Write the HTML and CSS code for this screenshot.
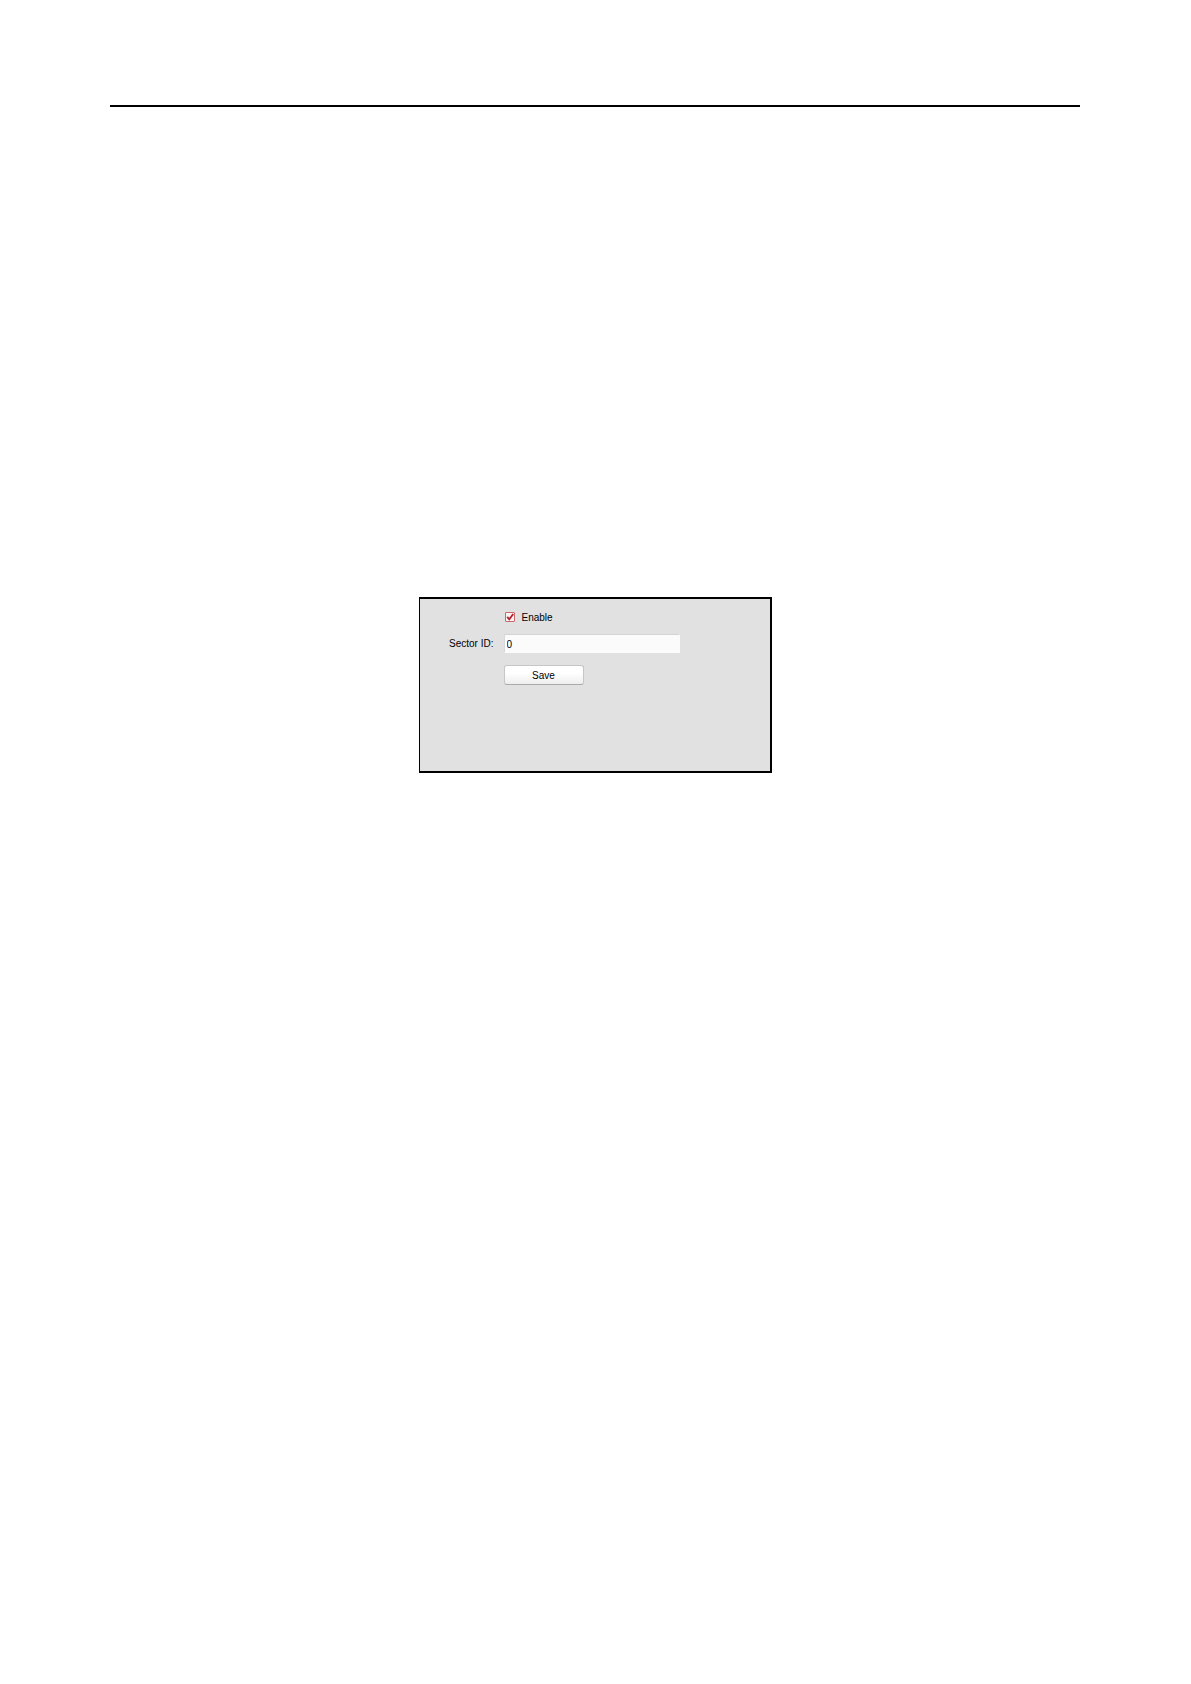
FILE: index.html
```html
<!DOCTYPE html>
<html lang="en">
<head>
<meta charset="utf-8">
<title>Sector ID</title>
<link rel="stylesheet" href="styles.css">
</head>
<body>
<main class="page">
  <hr class="rule">
  <form class="panel">
    <label class="enable">
      <span class="tick">
        <input class="tick-input" type="checkbox" checked>
        <svg class="tick-mark" viewBox="0 0 10 10" aria-hidden="true"><path d="M2.2 4.8 L4.3 7.3 L8.2 2" fill="none" stroke="#b3202c" stroke-width="1.8"/></svg>
      </span>
      <span class="text">Enable</span>
    </label>
    <label class="caption text" for="sector">Sector ID:</label>
    <input class="field" id="sector" type="text" value="0">
    <button class="save" type="button">Save</button>
  </form>
</main>
</body>
</html>
```
FILE: styles.css
```css
* {
  box-sizing: border-box;
}

body {
  margin: 0;
  background: #fff;
  color: #000;
  font: 10px/12px "Liberation Sans", Arial, sans-serif;
}

.page {
  padding: 105px 111px 0 110px;
}

.rule {
  height: 2px;
  margin: 0 0 490px;
  border: 0;
  background: #000;
}

.panel {
  display: grid;
  grid-template-columns: 74px minmax(0, 176px);
  align-items: center;
  align-content: start;
  gap: 12px 10px;
  max-width: 353px;
  min-height: 176px;
  margin: 0 auto;
  padding: 13px 0;
  border: 2px solid #000;
  border-left-width: 1px;
  background: #e1e1e1;
}

.enable {
  grid-column: 2;
  display: flex;
  align-items: center;
  gap: 7px;
  height: 10px;
  padding-left: 1px;
}

.text {
  padding-top: 1px;
}

.tick {
  display: grid;
  width: 10px;
  height: 10px;
}

.tick-input,
.tick-mark {
  grid-area: 1 / 1;
  width: 10px;
  height: 10px;
  margin: 0;
}

.tick-input {
  appearance: none;
  border: 1px solid #c8686c;
  border-radius: 1px;
  background: #fbf3f3;
}

.tick-mark {
  visibility: hidden;
  pointer-events: none;
}

.tick-input:checked + .tick-mark {
  visibility: visible;
}

.caption {
  text-align: right;
}

.field {
  width: 100%;
  height: 19px;
  padding: 1px 2px 0;
  border: 1px solid #fbfbfb;
  border-top-color: #d4d4d4;
  border-left-color: #d8d8d8;
  background: #fbfbfb;
  color: inherit;
  font: inherit;
}

.save {
  grid-column: 2;
  width: 80px;
  height: 20px;
  padding: 2px 0 0;
  border: 1px solid #c6c6c6;
  border-bottom-color: #aaa;
  border-radius: 3px;
  background: linear-gradient(#fff 40%, #eee);
  color: inherit;
  font: inherit;
}
```
